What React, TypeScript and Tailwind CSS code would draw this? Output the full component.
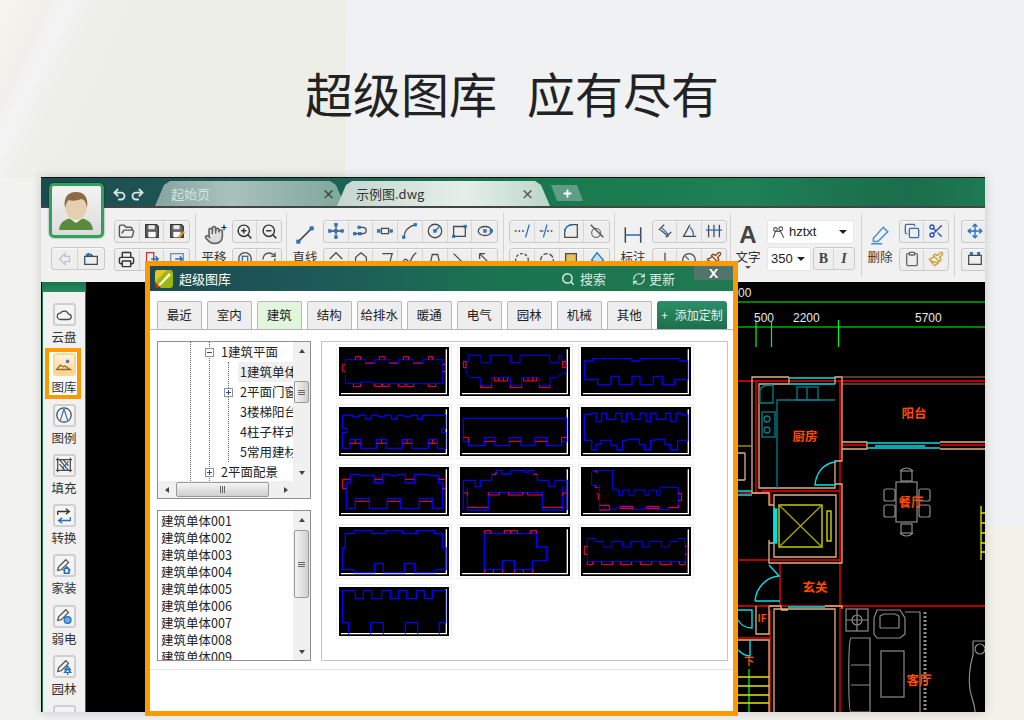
import type { ReactNode } from "react";
import { FolderOpen, Printer, ZoomIn, ZoomOut, Hand, Search, RefreshCw, Undo2, Redo2, Plus, Copy, Scissors, Clipboard, Paintbrush, Move } from "lucide-react";

const cjk = "font-['Noto_Sans_CJK_SC','Noto_Sans',sans-serif]";

// ---- toolbar bits ----
function Group({ children, className = "" }: { children: ReactNode; className?: string }) {
  return (
    <div className={`flex h-[23px] rounded-[3px] border border-[#c9c9c9] bg-[#eeeeee] shadow-[inset_0_1px_0_#fafafa] ${className}`}>
      {children}
    </div>
  );
}

function Cell({ children, w = "w-[25px]" }: { children?: ReactNode; w?: string }) {
  return (
    <div className={`flex h-full items-center justify-center border-r border-[#d6d6d6] last:border-r-0 ${w}`}>
      {children}
    </div>
  );
}

function Sep() {
  return <div className="h-[64px] w-px shrink-0 bg-[#d4d4d4]" />;
}

function Ico({ children, size = "h-[18px] w-[18px]" }: { children: ReactNode; size?: string }) {
  return (
    <svg viewBox="0 0 20 20" fill="none" stroke="#4a4a4a" strokeWidth="1.4" className={size}>
      {children}
    </svg>
  );
}

function Node({ x, y }: { x: number; y: number }) {
  return <rect x={x - 1.5} y={y - 1.5} width="3" height="3" fill="#2a78c8" stroke="#1a5aa0" strokeWidth="0.5" />;
}

function BigTool({ icon, label, caret }: { icon: ReactNode; label: string; caret?: boolean }) {
  return (
    <div className="-mt-[5px] flex w-[26px] shrink-0 flex-col items-center pt-[3px]">
      <div className="flex h-[26px] items-center justify-center">{icon}</div>
      <span className="whitespace-nowrap text-[12.5px] leading-[18px] text-[#333]">{label}</span>
      {caret && <span className="-mb-[3px] h-0 w-0 border-x-[3px] border-t-[3px] border-x-transparent border-t-[#555]" />}
    </div>
  );
}

function SaveIcon({ as }: { as?: boolean }) {
  return (
    <Ico>
      <path d="M3 3h12l2 2v12H3z" fill="#666" stroke="#333" />
      <rect x="6" y="3.5" width="7" height="4.5" fill="#e8e8e8" stroke="none" />
      <rect x="6" y="11" width="8" height="6" fill="#fff" stroke="none" />
      {as && <path d="M11 17l6-7 1.5 1.5-6 6.5z" fill="#e3a02f" stroke="#b5761a" strokeWidth="0.6" />}
    </Ico>
  );
}

// ---- left rail ----
function RailItem({ label, children, active }: { label: string; children: ReactNode; active?: boolean }) {
  return (
    <div className="relative flex h-[50.3px] shrink-0 flex-col items-center">
      {active && <div className="absolute left-[2px] top-[-5px] h-[51px] w-[36px] border-4 border-[#ff9900] bg-white" />}
      <div className={`relative flex h-[23px] w-[23px] items-center justify-center rounded-[3px] border-2 ${active ? "border-[#fbd79c] bg-[linear-gradient(#fff3dd,#ffd089)]" : "border-[#cfcfcf] bg-[#f4f4f4]"}`}>
        {children}
      </div>
      <span className="relative mt-[2px] text-[12.5px] leading-[18px] text-[#333]">{label}</span>
    </div>
  );
}

function PenIcon({ children }: { children: ReactNode }) {
  return (
    <Ico>
      <path d="M12 3l3 3-8 8-4 1 1-4z" stroke="#555" />
      {children}
    </Ico>
  );
}

// ---- dialog bits ----
const tabs = ["最近", "室内", "建筑", "结构", "给排水", "暖通", "电气", "园林", "机械", "其他"];
const listItems = ["001", "002", "003", "004", "005", "006", "007", "008", "009"];

function Arrow({ dir }: { dir: "up" | "down" | "left" | "right" }) {
  const cls = {
    up: "border-x-[3.5px] border-b-[4px] border-x-transparent border-b-[#444]",
    down: "border-x-[3.5px] border-t-[4px] border-x-transparent border-t-[#444]",
    left: "border-y-[3.5px] border-r-[4px] border-y-transparent border-r-[#444]",
    right: "border-y-[3.5px] border-l-[4px] border-y-transparent border-l-[#444]",
  }[dir];
  return <span className={`h-0 w-0 ${cls}`} />;
}

function Grip({ vertical }: { vertical?: boolean }) {
  return (
    <div className={`flex ${vertical ? "flex-col" : ""} gap-[1px]`}>
      {[0, 1, 2].map((i) => (
        <span key={i} className={`bg-[#666] ${vertical ? "h-px w-[7px]" : "h-[7px] w-px"}`} />
      ))}
    </div>
  );
}

function VScroll({ top, height }: { top: string; height: string }) {
  return (
    <div className="flex h-full w-[17px] shrink-0 flex-col items-center bg-[#f0f0f0]">
      <div className="flex h-[17px] shrink-0 items-center justify-center"><Arrow dir="up" /></div>
      <div className={`flex w-[15px] shrink-0 items-center justify-center rounded-[2px] border border-[#9a9a9a] bg-[linear-gradient(90deg,#f4f4f4,#d0d0d0)] ${top} ${height}`}>
        <Grip vertical />
      </div>
      <div className="mt-auto flex h-[17px] shrink-0 items-center justify-center"><Arrow dir="down" /></div>
    </div>
  );
}

function Thumb({ blue, red, bold }: { blue: string; red?: string; bold?: boolean }) {
  return (
    <div className="h-[55px] w-[116px] border border-[#eeeeee] bg-white p-[2px]">
      <svg viewBox="0 0 330 147" className="block h-[49px] w-[110px] bg-black" fill="none">
        <path d="M6 140H322V7" stroke="#fff" strokeWidth="4" />
        <path d={blue} stroke="#0000ff" strokeWidth={bold ? 4 : 3} />
        {red && <path d={red} stroke="#ff0033" strokeWidth="3" />}
      </svg>
    </div>
  );
}

const thumbs: { blue: string; red?: string; bold?: boolean }[] = [
  {
    blue: "M19 38H79V50H106V38H151V50H178V38H223V50H251V38H311V110H103V105H65V110H19Z",
    red: "M49 38V29H65V38M121 38V29H138V38M193 38V29H209V38M268 38V29H281V38M79 48H106M151 48H178M223 48H251M19 52H11V74H19M311 52H319V74H311M43 110V119H65V110M106 110V118H127V110M130 110V118H150V110M178 110V119H198V110M204 110V119H224V110M268 110V119H290V110",
  },
  {
    blue: "M18 43H25V25H63V47H91V25H151V47H180V25H269V47H297V25H305V43H318V78H308L290 92H270V115H238V92H185V115H151V92H95V115H61V92H30L18 78Z",
    red: "M10 43H18V62H10ZM308 43H318V62H308ZM61 115V122H95V115M151 115V122H185V115M238 115V122H270V115M103 92V102H143V92M116 92V102M130 92V102M191 92V102H230V92M204 92V102M217 92V102",
  },
  { blue: "M10 42H34V35H152V42H177V35H295V42H320V98H281V113H244V88H217V113H177V88H153V113H114V88H90V113H50V98H10Z", bold: true },
  {
    blue: "M10 25H40V29H60V25H80V36H97V25H117V29H137V25H157V36H175V25H195V29H215V25H235V36H250V25H320V64H308V77H320V124H295V97H268V124H218V97H190V124H141V97H113V124H65V97H33V124H10V77H24V64H10Z",
    red: "M33 109H65M113 109H141M190 109H218M268 109H295M49 97V109M127 97V109M204 97V109M281 97V109",
    bold: true,
  },
  {
    blue: "M10 34H320V104H305V116H260V92H225V116H183V92H148V116H105V92H73V116H25V104H10Z",
    red: "M10 91H25V104M73 103H105M148 103H183M225 103H260M305 104V91H320",
    bold: true,
  },
  {
    blue: "M10 100V22H30V19H45V44H62V19H77V37H104V19H122V44H137V19H153V37H177V19H195V44H209V19H225V37H254V19H270V44H285V19H302V24H320V100H290V129H268V112H252V97H222V100H208V129H190V112H175V97H140V100H125V129H108V115H90V100H60V112H45V129H32V100Z",
    bold: true,
  },
  {
    blue: "M22 124V47H34V22H61V26H106V48H130V22H153V26H176V22H199V48H226V22H271V26H298V48H311V124H280V94H241V124H184V94H145V124H91V94H49V124Z",
    red: "M34 37H10V65H22M106 37H130M199 37H226M298 37H320V65H311M49 103H91M145 103H184M241 103H280",
    bold: true,
  },
  {
    blue: "M10 129V40H46V59H61V40H95V22H108V10H125V21H153V10H193V15H207V10H221V22H232V40H267V58H285V40H321V129M85 129V76H247V129M22 60V129H85M247 129H308V60",
    red: "M97 22H108V15M221 22H232M85 84H118M145 84H188M203 84H247M85 76V84M118 76V84M145 76V84M188 76V84M203 76V84M10 78H22V86M321 78H308V86M22 121H85M247 121H308",
    bold: true,
  },
  {
    blue: "M32 15L42 10H95V67H112V85H125V69H144V85H159V69H192V85H204V69H227V85H237V61H292V122H262V128H224V122H190V128H152V122H105V128H85V115H72V129H55V55H32Z",
    red: "M43 10V15H52M43 55V62H52M46 80H52V100M292 80H302V100H292M55 115H85V129H55M115 118H155V125H115M195 118H233V125H195M262 122H292V115",
  },
  { blue: "M10 128V63H19V20H45V11H98V20H140V11H190V20H232V11H286V20H311V63H321V128H289V137H227V110H197V137H133V110H106V137H44V128Z", bold: true },
  {
    blue: "M73 20H230V60H260V101H218V128H163V101H128V128H73Z",
    red: "M73 20V11H92V20M133 20V11H172V20M152 11V20M211 20V11H230V20M73 128V138M100 128V138M128 128V138M163 128V138M190 128V138M218 128V138",
    bold: true,
  },
  {
    blue: "M19 35H43V44H67V60H92V44H125V60H148V44H184V60H205V44H242V60H266V44H289V35H313V104H19Z",
    red: "M19 58H10V82H19M313 58H320V82H313M19 104V113H35V104M62 104V113H95V104M118 104V113H152V104M178 104V113H212V104M237 104V113H270V104M295 104V113H313V104",
  },
  {
    blue: "M29 140V107H10V11H49V35H73V11H98V35H128V11H154V35H178V11H202V35H232V11H256V35H280V11H320V107H301V140M95 140V107H133V140M199 140V107H236V140",
    bold: true,
  },
];

function TreeRow({ children, pad, hl }: { children: ReactNode; pad: string; hl?: boolean }) {
  return (
    <div className={`relative flex h-[20px] items-center whitespace-nowrap text-[12.5px] text-[#222] ${pad}`}>
      {hl && <div className="absolute inset-y-0 left-[80px] right-0 bg-[#f0f0f0]" />}
      <span className="relative">{children}</span>
    </div>
  );
}

function Box({ plus, left }: { plus?: boolean; left: string }) {
  return (
    <span className={`absolute top-[5px] flex h-[9px] w-[9px] items-center justify-center border border-[#8a93a5] bg-white text-[#334] ${left}`}>
      <span className="h-px w-[5px] bg-[#334c88]" />
      {plus && <span className="absolute h-[5px] w-px bg-[#334c88]" />}
    </span>
  );
}

// ---- the drawing behind the dialog, in page coordinates ----
function CadCanvas() {
  const tan = "#e0b184";
  const red = "#f00000";
  const cyan = "#00dfe8";
  const teal = "#00808a";
  const yel = "#e5e500";
  const gray = "#8c8c8c";
  const label = "#ff4a00";
  return (
    <svg viewBox="86 282 899 430" className="block h-[430px] w-[899px] bg-black" fill="none">
      <g stroke="#00ff00" strokeWidth="1.2">
        <path d="M738 302H985M738 327H985M756 322V347M771.5 322V347M838.5 320V347M749 669V712" />
      </g>
      <g fill="#e8e8e8" fontSize="12" fontFamily="'Liberation Sans',sans-serif">
        <text x="738" y="297">00</text>
        <text x="754" y="322">500</text>
        <text x="793" y="322">2200</text>
        <text x="915" y="322">5700</text>
      </g>
      {/* walls */}
      <g stroke={red} strokeWidth="1.4">
        <path d="M738 381H985M738 560H769M738 606H985M738 638H770M756 381V493M739 493H770V505M770 610V712M840 381V712M842 445H867M940 445H985M780 563V606M769 560H840" />
        <path d="M761 491H840" />
      </g>
      <g stroke="#7a4a35" strokeWidth="1.4">
        <path d="M842 377H985M842 384H985" />
      </g>
      <g stroke={tan} strokeWidth="1.3">
        <path d="M789 377H752V493H769V505H774M789 377V384H759V488H835V461H842V377H835V384M842 442H867V449H842M940 442H985M940 449H985M835 484H842V563H769V540M774 543H769V562M774 495H836V557H774Z" />
        <path d="M738 453H745M738 480H745M745 453V480M769 606H781V610M756 606V634H769V606M774 712V609H835V712M825 606H842V609M738 640H769V712M788 610H781" />
      </g>
      {/* windows, doors */}
      <g stroke={cyan} strokeWidth="1.4">
        <path d="M789 378H835M789 384H835M867 443H940M867 448H940M875 446H925M738 491H752M738 495H752" />
        <path d="M835 462C822 464 816 474 815 485H835M755 601C756 588 766 577 779 576L769 565M755 601H780M788 607H825M738 610H752V628C745 628 740 624 738 620M750 640V656C745 656 740 652 738 650" />
        <rect x="774" y="509" width="2.6" height="34" fill={cyan} />
      </g>
      <g stroke={teal} strokeWidth="1.3">
        <path d="M777 488V400H835M773 385V403H760V390C761 386 765 385 773 385" />
        <rect x="797" y="387" width="21" height="13" />
        <rect x="762" y="412" width="13" height="25" />
        <circle cx="767" cy="419" r="3" />
        <circle cx="767" cy="430" r="3" />
        <path d="M807 388V399" />
      </g>
      {/* lift */}
      <g stroke={yel} strokeWidth="1.3">
        <rect x="779" y="505" width="43" height="42" />
        <rect x="827" y="511" width="4" height="30" />
        <path d="M779 505L822 547M822 505L779 547" stroke="#aaa800" />
        <path d="M738 446H752" stroke="#aaa800" />
        <path d="M981 506V560M981 513H985M981 523H985M981 533H985M981 543H985M981 552H985" />
        <path d="M738 677H769M738 686H769M738 695H769M738 703H769" />
      </g>
      {/* dining set */}
      <g stroke={gray} strokeWidth="1.2">
        <rect x="896" y="482" width="21" height="40" />
        <rect x="901" y="471" width="11" height="10" />
        <path d="M900 471C904 467 909 467 913 471M900 533C904 537 909 537 913 533" />
        <rect x="901" y="524" width="11" height="9" />
        <rect x="884" y="489" width="11" height="12" rx="2" />
        <rect x="884" y="505" width="11" height="12" rx="2" />
        <rect x="919" y="489" width="11" height="12" rx="2" />
        <rect x="919" y="505" width="11" height="12" rx="2" />
        {/* living room */}
        <rect x="846" y="609" width="22" height="22" />
        <circle cx="857" cy="620" r="5" />
        <path d="M846 620H868M857 609V631" />
        <path d="M877 610H900L905 618V634L900 638H877L874 634V618Z" />
        <path d="M880 628V616L884 614H895L899 616V628H880" />
        <path d="M851 638H870V712H851C848 712 848 640 851 638ZM851 665H870M851 685H870" />
        <rect x="881" y="651" width="23" height="46" />
        <path d="M905 612H920V712" />
        <path d="M925 612V712" strokeDasharray="2 2" strokeWidth="3" />
        <path d="M973 641H985M973 641V655C970 665 968 675 970 690C972 700 975 705 975 712" />
        <circle cx="980" cy="649" r="5" />
      </g>
      <g fill={label} fontSize="12.5" fontWeight="700" fontFamily="'Noto Sans CJK SC',sans-serif" textAnchor="middle">
        <text x="914" y="418">阳台</text>
        <text x="805" y="441">厨房</text>
        <text x="911" y="507">餐厅</text>
        <text x="815" y="592">玄关</text>
        <text x="919" y="685">客厅</text>
        <text x="762" y="622" fontSize="10">IF</text>
        <text x="749" y="665" fontSize="10">下</text>
      </g>
    </svg>
  );
}

function Avatar() {
  return (
    <div className="absolute left-[8px] top-[5px] z-10 h-[55px] w-[55px] overflow-hidden rounded-[5px] border-[3px] border-[#2ea25a] bg-[linear-gradient(#f3f3f3,#dcdcdc)] shadow-[0_0_2px_rgba(0,0,0,0.5)]">
      <svg viewBox="0 0 49 49" className="block h-full w-full">
        <path d="M7 44c1-9 7-12 17-12s16 3 17 12z" fill="#5c8a3c" />
        <path d="M17 32l7 5 7-5-3-2h-8z" fill="#f4f1ea" />
        <ellipse cx="24" cy="21" rx="11" ry="13" fill="#e6cfae" />
        <path d="M13 22C11 10 17 6 24 6s13 4 11 16c-1-6-3-9-6-9-4 2-9 2-12 1-2 1-3 4-4 8z" fill="#8d6a42" />
      </svg>
    </div>
  );
}

export default function App() {
  return (
    <div className={`relative h-[720px] w-[1024px] overflow-hidden bg-[#f0f1f3] ${cjk}`}>
      {/* backdrop panels */}
      <div className="absolute left-0 top-0 h-[178px] w-[345px] bg-[linear-gradient(115deg,#f4f3ee_0%,#f1f0ec_12%,#f3f4f4_16%,#eeefe9_24%,#ecede6_100%)]" />
      <div className="absolute bottom-0 left-0 top-[178px] w-[41px] bg-[#f2f2ee]" />
      <div className="absolute bottom-0 right-0 h-[193px] w-[39px] bg-[#f3f1ea]" />
      <div className="absolute bottom-0 right-0 h-[8px] w-[274px] bg-[#f3f1ea]" />

      <h1 className="relative flex h-[177px] items-center justify-center gap-[30px] pt-[7px] text-[48px] font-normal leading-none text-[#222]">
        <span>超级图库</span>
        <span>应有尽有</span>
      </h1>

      {/* main window */}
      <div className="relative ml-[41px] w-[944px] border-t border-[#111] shadow-[0_0_10px_rgba(0,0,0,0.18)]">
        <Avatar />

        {/* title bar */}
        <div className="relative flex h-[30px] items-end border-b-2 border-[#444] bg-[linear-gradient(90deg,#1c4b4f_0%,#1e5c56_25%,#197a4e_55%,#1f7f55_75%,#1a6d4d_92%,#1d7a52_100%)] pl-[71px]">
          <div className="mb-[4px] flex w-[43px] gap-[3px] text-[#d8e6e2]">
            <Undo2 size={15} strokeWidth={3} />
            <Redo2 size={15} strokeWidth={3} />
          </div>
          <div className="flex h-[25px] w-[190px] items-center justify-between bg-[linear-gradient(90deg,#86a5a0,#a9c1bb_40%,#7ea79a)] pl-[16px] pr-[10px] text-[13px] text-[#d5e4df] [clip-path:polygon(0_100%,9px_4px,15px_0,175px_0,181px_4px,190px_100%)]">
            <span>起始页</span>
            <span className="font-bold text-[#444]">×</span>
          </div>
          <div className="-ml-[8px] flex h-[25px] w-[213px] items-center justify-between bg-[linear-gradient(90deg,#c3d6cf,#e5efea_60%,#bcd6c9)] pl-[19px] pr-[16px] text-[13px] text-[#333] [clip-path:polygon(0_100%,9px_4px,15px_0,198px_0,204px_4px,213px_100%)]">
            <span>示例图.dwg</span>
            <span className="font-bold text-[#555]">×</span>
          </div>
          <div className="mb-[5px] ml-[1px] flex h-[16px] w-[32px] items-center justify-center bg-[#5f9d86] text-white [clip-path:polygon(0_0,26px_0,32px_100%,6px_100%)]">
            <Plus size={11} strokeWidth={4} />
          </div>
        </div>

        {/* toolbar */}
        <div className="flex h-[74px] items-center overflow-hidden bg-[#f1f1f1] pl-[10px]">
          <div className="mb-[12px] mt-auto flex shrink-0">
            <Group>
              <Cell w="w-[26px]"><Ico><path d="M10 4L4 10l6 6v-3h5V7h-5z" stroke="#b8c4d0" /></Ico></Cell>
              <Cell w="w-[26px]"><Ico><path d="M3 7h14v9H3zM5 7V5h5l2 2" /><path d="M7 3v5M4.5 5.5h5" stroke="#1f6fc0" /></Ico></Cell>
            </Group>
          </div>

          <div className="ml-[9px] flex w-[76px] shrink-0 flex-col gap-[5px]">
            <Group>
              <Cell><FolderOpen size={17} color="#555" /></Cell>
              <Cell><SaveIcon /></Cell>
              <Cell><SaveIcon as /></Cell>
            </Group>
            <Group>
              <Cell><Printer size={17} color="#333" /></Cell>
              <Cell><Ico><path d="M4 3h8v14H4z" stroke="#b33" /><path d="M9 10h8M14 7l3 3-3 3" stroke="#1f6fc0" /></Ico></Cell>
              <Cell><Ico><path d="M3 4h14v12H3z" stroke="#6a8db5" /><path d="M8 10h8M13 7l3 3-3 3" stroke="#1f6fc0" /></Ico></Cell>
            </Group>
          </div>

          <div className="ml-[5px]"><Sep /></div>
          <div className="ml-[5px]"><BigTool label="平移" icon={<span className="relative flex"><Hand size={20} color="#666" fill="#ddd" /><span className="absolute -right-[3px] -top-[3px] text-[10px] font-bold leading-none text-[#222]">+</span></span>} /></div>
          <div className="ml-[5px] flex w-[50px] shrink-0 flex-col gap-[5px]">
            <Group>
              <Cell><ZoomIn size={17} color="#333" /></Cell>
              <Cell><ZoomOut size={17} color="#333" /></Cell>
            </Group>
            <Group>
              <Cell><Ico><circle cx="10" cy="10" r="7" /><rect x="7" y="7" width="6" height="6" stroke="#1f6fc0" /></Ico></Cell>
              <Cell><RefreshCw size={16} color="#555" /></Cell>
            </Group>
          </div>

          <div className="ml-[4px]"><Sep /></div>
          <div className="ml-[5px]"><BigTool label="直线" icon={<Ico size="h-[22px] w-[22px]"><path d="M4 16L16 4" /><Node x={4} y={16} /><Node x={16} y={4} /></Ico>} /></div>
          <div className="ml-[5px] flex w-[175px] shrink-0 flex-col gap-[5px]">
            <Group>
              <Cell><Ico><path d="M10 3v14M3 10h14" /><Node x={10} y={3} /><Node x={10} y={17} /><Node x={3} y={10} /><Node x={17} y={10} /><Node x={10} y={10} /></Ico></Cell>
              <Cell><Ico><path d="M3 13h9c5 0 5-7 0-7H8" /><Node x={3} y={13} /><Node x={9} y={13} /><Node x={8} y={6} /></Ico></Cell>
              <Cell><Ico><path d="M6 7h8v6H6z" /><Node x={3} y={10} /><Node x={17} y={10} /></Ico></Cell>
              <Cell><Ico><path d="M3 17C4 10 8 5 16 3" /><Node x={3} y={17} /><Node x={16} y={3} /></Ico></Cell>
              <Cell><Ico><circle cx="10" cy="10" r="7.5" /><path d="M10 10l5-5" stroke="#1f6fc0" /><Node x={10} y={10} /></Ico></Cell>
              <Cell><Ico><path d="M4 5h13v11H4z" /><Node x={4} y={16} /><Node x={17} y={5} /></Ico></Cell>
              <Cell><Ico><ellipse cx="10" cy="10" rx="7.5" ry="5" /><Node x={10} y={10} /><Node x={17} y={10} /></Ico></Cell>
            </Group>
            <Group>
              <Cell><Ico><path d="M3 10l7-7 7 7" /></Ico></Cell>
              <Cell><Ico><path d="M4 16V8l6-5 6 5v8" /></Ico></Cell>
              <Cell><Ico><path d="M7 4h11l-4 14" /></Ico></Cell>
              <Cell><Ico><path d="M2 14c4-10 6 4 9-3s4-6 6-8" /></Ico></Cell>
              <Cell><Ico><path d="M4 18L7 5h6l3 13" /></Ico></Cell>
              <Cell><Ico><path d="M4 4l12 12" /></Ico></Cell>
              <Cell><Ico><path d="M4 4l12 12M4 4h6M4 4v6" /></Ico></Cell>
            </Group>
          </div>

          <div className="ml-[5px]"><Sep /></div>
          <div className="ml-[5px] flex w-[101px] shrink-0 flex-col gap-[5px]">
            <Group>
              <Cell><Ico><path d="M2 10h2M6 10h2M10 10h2" /><path d="M18 3l-4 14" stroke="#1f6fc0" /></Ico></Cell>
              <Cell><Ico><path d="M10 10h2M14 10h2" /><path d="M2 10h4" /><path d="M10 3L6 17" stroke="#1f6fc0" /></Ico></Cell>
              <Cell><Ico><path d="M3 17V11C3 6 7 3 12 3h5v14z" /><path d="M3 11C3 6 7 3 12 3" stroke="#1f6fc0" /></Ico></Cell>
              <Cell><Ico><circle cx="9" cy="12" r="5" stroke="#777" /><path d="M3 3l14 14" /></Ico></Cell>
            </Group>
            <Group>
              <Cell><Ico><circle cx="10" cy="11" r="7" strokeDasharray="3 2" /></Ico></Cell>
              <Cell><Ico><circle cx="10" cy="11" r="7" strokeDasharray="5 2" /></Ico></Cell>
              <Cell><Ico><path d="M4 4h12v9l-6 4-6-4z" fill="#e3c25a" /></Ico></Cell>
              <Cell><Ico><path d="M10 3l7 8-5 6-8-6z" fill="#bfe0f5" stroke="#1f6fc0" /></Ico></Cell>
            </Group>
          </div>

          <div className="ml-[4px]"><Sep /></div>
          <div className="ml-[5px]"><BigTool label="标注" icon={<Ico size="h-[22px] w-[22px]"><path d="M3 3v14M17 3v14" /><path d="M3 10h14" stroke="#1f6fc0" /></Ico>} /></div>
          <div className="ml-[6px] flex w-[75px] shrink-0 flex-col gap-[5px]">
            <Group>
              <Cell><Ico><path d="M5 9l9 7M9 3L3 9M17 11l-6 6" /><path d="M6 6l8 8" stroke="#1f6fc0" /></Ico></Cell>
              <Cell><Ico><path d="M3 16h15M4 16L11 3" /><path d="M11 6c3 2 4 6 4 10" stroke="#1f6fc0" /></Ico></Cell>
              <Cell><Ico><path d="M4 3v14M10 3v14M16 3v14" /><path d="M1 9h18" stroke="#1f6fc0" /></Ico></Cell>
            </Group>
            <Group>
              <Cell><Ico><path d="M3 15h14M10 3v9" /></Ico></Cell>
              <Cell><Ico><circle cx="10" cy="11" r="7" /><path d="M10 11L6 7" stroke="#1f6fc0" /></Ico></Cell>
              <Cell><Paintbrush size={16} color="#8a4a20" /></Cell>
            </Group>
          </div>

          <div className="ml-[3px]"><Sep /></div>
          <div className="ml-[4px]">
            <BigTool label="文字" caret icon={<span className="font-['Liberation_Sans'] text-[24px] font-bold leading-none text-[#444]">A</span>} />
          </div>
          <div className="ml-[6px] mt-[1px] flex w-[88px] shrink-0 flex-col gap-[3px]">
            <div className="flex h-[24px] w-[87px] items-center rounded-[2px] border border-[#e6e6e6] bg-white pl-[3px] pr-[6px] text-[13px] text-[#222]">
              <Ico size="h-[15px] w-[15px]"><circle cx="6" cy="6" r="2.5" /><circle cx="13" cy="5" r="2.5" /><path d="M3 17l3-9 7 1 4 8" /></Ico>
              <span className="ml-[3px] font-['Liberation_Sans']">hztxt</span>
              <span className="ml-auto h-0 w-0 border-x-[4px] border-t-[4px] border-x-transparent border-t-[#222]" />
            </div>
            <div className="flex items-start gap-[2px]">
              <div className="flex h-[24px] w-[46px] items-center rounded-[2px] border border-[#e6e6e6] bg-white pl-[3px] pr-[5px] font-['Liberation_Sans'] text-[13px] text-[#222]">
                350
                <span className="ml-auto h-0 w-0 border-x-[4px] border-t-[4px] border-x-transparent border-t-[#222]" />
              </div>
              <Group>
                <Cell w="w-[20px]"><span className="font-['Liberation_Serif'] text-[14px] font-bold text-[#444]">B</span></Cell>
                <Cell w="w-[20px]"><span className="font-['Liberation_Serif'] text-[14px] font-bold italic text-[#444]">I</span></Cell>
              </Group>
            </div>
          </div>

          <div className="ml-[6px]"><Sep /></div>
          <div className="ml-[5px]"><BigTool label="删除" icon={<Ico size="h-[22px] w-[22px]"><path d="M13 3l4 4-9 9H4v-3z" stroke="#4a8fd0" /><path d="M2 18h10" stroke="#4a8fd0" /></Ico>} /></div>
          <div className="ml-[6px] flex w-[50px] shrink-0 flex-col gap-[5px]">
            <Group>
              <Cell><Copy size={16} color="#3a6ea8" /></Cell>
              <Cell><Scissors size={16} color="#2a4fb0" /></Cell>
            </Group>
            <Group>
              <Cell><Clipboard size={16} color="#666" /></Cell>
              <Cell><Paintbrush size={16} color="#c9a030" /></Cell>
            </Group>
          </div>

          <div className="ml-[5px]"><Sep /></div>
          <div className="ml-[6px] flex w-[30px] shrink-0 flex-col gap-[5px]">
            <Group className="rounded-r-none border-r-0">
              <Cell w="w-[25px]"><Move size={16} color="#1f6fc0" /></Cell>
            </Group>
            <Group className="rounded-r-none border-r-0">
              <Cell w="w-[25px]"><Ico><path d="M3 6h14v10H3z" /><Node x={6} y={4} /><Node x={14} y={4} /></Ico></Cell>
            </Group>
          </div>
        </div>

        {/* rail and canvas */}
        <div className="flex h-[430px] bg-black pl-px">
          <div className="w-[44px] shrink-0 overflow-hidden border-x border-[#1b7a50] bg-[#f1f1f1]">
            <div className="h-[10px] bg-[linear-gradient(#14764a,#2b8a5f)]" />
            <div className="flex flex-col pt-[11px]">
              <RailItem label="云盘"><Ico><path d="M6 15h9a3 3 0 000-6 5 5 0 00-9-1 3.5 3.5 0 000 7z" /></Ico></RailItem>
              <RailItem label="图库" active><Ico><path d="M2 15l4-5 3 2 2-1 6 4z" stroke="#8a6a30" /><circle cx="14" cy="6" r="2" fill="#3a7fc0" stroke="none" /></Ico></RailItem>
              <RailItem label="图例"><Ico><circle cx="10" cy="10" r="8" /><path d="M10 3L6 16M10 3l4 13" stroke="#3a78b8" /></Ico></RailItem>
              <RailItem label="填充"><Ico><path d="M3 2v16M17 2v16M1 4h18M1 16h18M5 4l10 12M9 4l6 7M5 9l6 7" /><path d="M8 14l7-8" stroke="#1f6fc0" /></Ico></RailItem>
              <RailItem label="转换"><Ico><path d="M3 9V5h12M12 2l4 3-4 3" stroke="#333" /><path d="M17 11v4H5M8 12l-4 3 4 3" stroke="#1f6fc0" /></Ico></RailItem>
              <RailItem label="家装"><PenIcon><path d="M9 15l4-4 4 4M10.5 14v4h5v-4" stroke="#1f6fc0" strokeWidth="1.8" /></PenIcon></RailItem>
              <RailItem label="弱电"><PenIcon><circle cx="14" cy="14.5" r="3.8" fill="#6fa8dc" stroke="#1f6fc0" /></PenIcon></RailItem>
              <RailItem label="园林"><PenIcon><path d="M14 9l-3 4h6zM14 12l-3.5 4h7zM14 16v3" stroke="#1f6fc0" /></PenIcon></RailItem>
              <RailItem label=""><span /></RailItem>
            </div>
          </div>
          <div className="min-w-0 flex-1 overflow-hidden">
            <CadCanvas />
          </div>
        </div>
      </div>

      {/* super library dialog */}
      <div className="absolute left-[145px] top-[261px] flex h-[455px] w-[593px] flex-col border-[5px] border-[#ff9900] bg-white">
        <div className="relative flex h-[25px] shrink-0 items-center bg-[linear-gradient(90deg,#1d4a50_0%,#1d5a58_30%,#1a7450_60%,#20794f_100%)] pl-[5px] text-[13px] text-white">
          <svg viewBox="0 0 18 18" className="h-[18px] w-[18px]">
            <rect width="18" height="18" rx="3" fill="#9ab812" />
            <path d="M0 12L6 18H3a3 3 0 01-3-3z" fill="#c9201e" />
            <path d="M0 3a3 3 0 013-3h9L0 12z" fill="#e9c31f" />
            <path d="M4 14L14 3l2 2L6 15l-3 1z" fill="#fff2d6" />
          </svg>
          <span className="ml-[6px]">超级图库</span>
          <span className="ml-auto flex items-center gap-[5px] text-[#dbe9e3]"><Search size={14} strokeWidth={2.5} />搜索</span>
          <span className="ml-[26px] mr-[58px] flex items-center gap-[3px] text-[#dbe9e3]"><RefreshCw size={14} />更新</span>
          <div className="absolute right-0 top-0 flex h-[14px] w-[39px] items-center justify-center bg-[#4f756d]">
            <span className="font-['DejaVu_Sans'] text-[13px] font-bold leading-none text-white [text-shadow:0_0_1px_#000]">X</span>
          </div>
        </div>

        <div className="flex h-[39px] shrink-0 items-end gap-[5.5px] border-b border-[#b5b5b5] pl-[7px]">
          {tabs.map((t) => (
            <div
              key={t}
              className={`flex h-[28px] w-[44.5px] items-center justify-center rounded-t-[2px] border border-b-0 border-[#b8b8b8] text-[12.5px] text-[#222] ${t === "建筑" ? "bg-[#e2f5dd]" : "bg-[#eeeeee]"}`}
            >
              {t}
            </div>
          ))}
          <div className="flex h-[28px] w-[70px] items-center justify-center gap-[7px] rounded-t-[3px] bg-[linear-gradient(#2b8f68,#1d6f4d)] text-[12px] text-[#e6f2ec]">
            <span>+</span>
            <span>添加定制</span>
          </div>
        </div>

        <div className="flex h-[340px] shrink-0 gap-[10px] border-b border-[#e4e4e4] pl-[7px] pt-[11px]">
          <div className="flex w-[154px] shrink-0 flex-col gap-[11px]">
            {/* tree */}
            <div className="flex h-[158px] flex-col border border-[#8e8f8f]">
              <div className="flex h-[139px]">
                <div className="relative w-[135px] overflow-hidden">
                  <div className="absolute left-[32px] top-0 h-full border-l border-dotted border-[#666]" />
                  <div className="absolute left-[51px] top-0 h-full border-l border-dotted border-[#666]" />
                  <div className="absolute left-[70px] top-[20px] h-[100px] border-l border-dotted border-[#666]" />
                  <TreeRow pad="pl-[63px]"><Box left="left-[-16px]" />1建筑平面</TreeRow>
                  <TreeRow pad="pl-[82px]" hl>1建筑单体</TreeRow>
                  <TreeRow pad="pl-[82px]"><Box plus left="left-[-16px]" />2平面门窗</TreeRow>
                  <TreeRow pad="pl-[82px]">3楼梯阳台</TreeRow>
                  <TreeRow pad="pl-[82px]">4柱子样式</TreeRow>
                  <TreeRow pad="pl-[82px]">5常用建材</TreeRow>
                  <TreeRow pad="pl-[63px]"><Box plus left="left-[-16px]" />2平面配景</TreeRow>
                </div>
                <VScroll top="mt-[22px]" height="h-[22px]" />
              </div>
              <div className="flex h-[17px] items-center bg-[#f0f0f0]">
                <div className="flex w-[18px] justify-center"><Arrow dir="left" /></div>
                <div className="flex h-[15px] w-[93px] items-center justify-center rounded-[2px] border border-[#9a9a9a] bg-[linear-gradient(#f4f4f4,#d0d0d0)]"><Grip /></div>
                <div className="ml-[8px] flex w-[18px] justify-center"><Arrow dir="right" /></div>
              </div>
            </div>
            {/* list */}
            <div className="flex h-[151px] border border-[#8e8f8f]">
              <div className="w-[135px] overflow-hidden pl-[3px] pt-[1px] text-[12.5px] leading-[17px] text-[#222]">
                {listItems.map((n) => (
                  <div key={n} className="whitespace-nowrap">建筑单体{n}</div>
                ))}
              </div>
              <VScroll top="mt-[2px]" height="h-[68px]" />
            </div>
          </div>

          {/* thumbnails */}
          <div className="h-[320px] w-[407px] border border-[#c4c4c4] pl-[14px] pt-[2px]">
            <div className="grid grid-cols-[116px_116px_116px] gap-x-[5px] gap-y-[5px]">
              {thumbs.map((t, i) => (
                <Thumb key={i} blue={t.blue} red={t.red} bold={t.bold} />
              ))}
            </div>
          </div>
        </div>
      </div>
    </div>
  );
}
